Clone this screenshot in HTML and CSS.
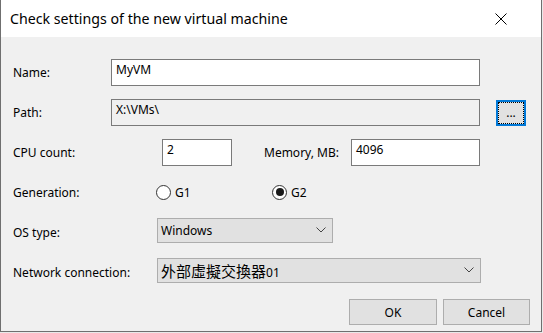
FILE: index.html
```html
<!DOCTYPE html>
<html lang="en">
<head>
    <meta charset="UTF-8">
    <title>Check settings of the new virtual machine</title>
    <link rel="stylesheet" href="styles.css">
</head>
<body>
    <div class="window">
        <!-- 标题栏 -->
        <div class="titlebar">
            <span class="title">Check settings of the new virtual machine</span>
            <span class="close">
                <svg width="12" height="12" viewBox="0 0 12 12">
                    <path d="M0.5 0.5 L11.5 11.5 M11.5 0.5 L0.5 11.5" stroke="#000" stroke-width="1" fill="none"/>
                </svg>
            </span>
        </div>

        <!-- 表单区 -->
        <div class="content">
            <div class="row">
                <span class="label label-name">Name:</span>
                <div class="textbox textbox-wide">MyVM</div>
            </div>
            <div class="row">
                <span class="label label-name">Path:</span>
                <div class="textbox textbox-wide readonly">X:\VMs\</div>
                <button class="browse" type="button">...</button>
            </div>
            <div class="row">
                <span class="label label-cpu">CPU count:</span>
                <div class="textbox textbox-cpu">2</div>
                <span class="label label-memory">Memory, MB:</span>
                <div class="textbox textbox-memory">4096</div>
            </div>
            <div class="row">
                <span class="label label-combo">Generation:</span>
                <span class="radio-item">
                    <span class="radio"></span>G1
                </span>
                <span class="radio-item">
                    <span class="radio checked"></span>G2
                </span>
            </div>
            <div class="row">
                <span class="label label-combo">OS type:</span>
                <div class="combo combo-os">
                    <span>Windows</span>
                    <svg class="chevron" width="10" height="6" viewBox="0 0 10 6">
                        <polyline points="0.5,0.5 5,5 9.5,0.5" stroke="#444" stroke-width="1" fill="none"/>
                    </svg>
                </div>
            </div>
            <div class="row">
                <span class="label label-combo">Network connection:</span>
                <div class="combo combo-network">
                    <span><span class="cjk">外部虛擬交換器</span>01</span>
                    <svg class="chevron" width="10" height="6" viewBox="0 0 10 6">
                        <polyline points="0.5,0.5 5,5 9.5,0.5" stroke="#444" stroke-width="1" fill="none"/>
                    </svg>
                </div>
            </div>
        </div>

        <!-- 按钮区 -->
        <div class="buttons">
            <button class="btn btn-ok" type="button">OK</button>
            <button class="btn btn-cancel" type="button">Cancel</button>
        </div>
    </div>
</body>
</html>
```

FILE: styles.css
```css
/* 全局样式 */
body {
    margin: 0;
    padding: 0;
    background: #e9e9e9;
    font-family: 'Noto Sans', sans-serif;
    font-size: 12px;
    color: #000;
}

/* 窗口 */
.window {
    width: 540px;
    height: 331px;
    border: 1px solid #6f6f6f;
    border-top: none;
    background: #f0f0f0;
    display: flex;
    flex-direction: column;
}

/* 标题栏 */
.titlebar {
    height: 37px;
    background: #fff;
    display: flex;
    align-items: center;
    padding-left: 9px;
}

.title {
    font-size: 14.2px;
    color: #000;
}

.close {
    margin-left: auto;
    margin-right: 34px;
    display: flex;
}

/* 表单区 */
.content {
    padding: 15px 12px 0 12px;
}

.row {
    height: 40px;
    display: flex;
    align-items: center;
}

.label {
    flex: none;
}

.label-name {
    width: 98px;
}

.label-cpu {
    width: 149px;
}

.label-memory {
    width: 87px;
    margin-left: 32px;
}

.label-combo {
    width: 143px;
}

/* 文本框 */
.textbox {
    box-sizing: border-box;
    height: 27px;
    border: 1px solid #7a7a7a;
    background: #fff;
    padding: 2px 4px;
    line-height: 16px;
}

.textbox-wide {
    width: 369px;
}

.textbox-cpu {
    width: 70px;
}

.textbox-memory {
    width: 129px;
}

.readonly {
    background: #f0f0f0;
}

/* 浏览按钮 */
.browse {
    box-sizing: border-box;
    width: 30px;
    height: 26px;
    margin-left: 16px;
    margin-top: 2px;
    border: 2px solid #0078d7;
    background: #e1e1e1;
    outline: 1px dotted #000;
    outline-offset: -3px;
    font-family: 'Noto Sans', sans-serif;
    font-size: 12px;
    padding: 0;
    line-height: 16px;
}

/* 单选框 */
.radio-item {
    width: 116px;
    display: flex;
    align-items: center;
    gap: 4px;
}

.radio {
    box-sizing: border-box;
    width: 15px;
    height: 15px;
    border: 1px solid #333;
    border-radius: 50%;
    background: #fff;
    display: flex;
    align-items: center;
    justify-content: center;
}

.radio.checked::after {
    content: '';
    width: 8px;
    height: 8px;
    border-radius: 50%;
    background: #1a1a1a;
}

/* 下拉框 */
.combo {
    box-sizing: border-box;
    height: 25px;
    margin-left: 1px;
    margin-bottom: 4px;
    border: 1px solid #adadad;
    background: #e1e1e1;
    display: flex;
    align-items: center;
    padding: 0 6px 0 3px;
}

.combo-os {
    width: 176px;
}

.combo-network {
    width: 324px;
}

.chevron {
    margin-left: auto;
}

.cjk {
    font-family: 'Noto Sans CJK TC', 'Noto Sans', sans-serif;
    font-size: 15px;
}

/* 底部按钮 */
.buttons {
    display: flex;
    justify-content: flex-end;
    gap: 6px;
    padding: 7px 11px 0 0;
}

.btn {
    box-sizing: border-box;
    height: 26px;
    border: 1px solid #adadad;
    background: #e1e1e1;
    font-family: 'Noto Sans', sans-serif;
    font-size: 12px;
    color: #000;
    padding: 0;
}

.btn-ok {
    width: 88px;
}

.btn-cancel {
    width: 87px;
}
```
